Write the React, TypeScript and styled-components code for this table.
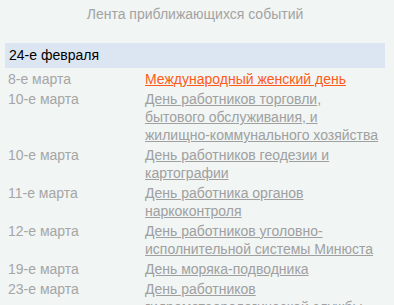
import React from 'react';
import styled, { createGlobalStyle } from 'styled-components';

const GlobalStyle = createGlobalStyle`
  html, body {
    margin: 0;
    padding: 0;
    background: #f1f5f4;
  }
  body {
    font-family: Arial, "Liberation Sans", sans-serif;
  }
`;

type Event = { date: string; title: string; hot?: boolean };

// ближайшие праздники
const events: Event[] = [
  { date: '8-е марта', title: 'Международный женский день', hot: true },
  { date: '10-е марта', title: 'День работников торговли, бытового обслуживания, и жилищно-коммунального хозяйства' },
  { date: '10-е марта', title: 'День работников геодезии и картографии' },
  { date: '11-е марта', title: 'День работника органов наркоконтроля' },
  { date: '12-е марта', title: 'День работников уголовно-исполнительной системы Минюста' },
  { date: '19-е марта', title: 'День моряка-подводника' },
  { date: '23-е марта', title: 'День работников гидрометеорологической службы' },
];

const App: React.FC = () => {
  return (
    <>
      <GlobalStyle />
      <Feed>
        <Title>Лента приближающихся событий</Title>
        <Today>24-е февраля</Today>
        <List>
          {events.map((e, i) => (
            <Row key={i}>
              <DateCell>{e.date}</DateCell>
              <Link href="#" $hot={e.hot}>{e.title}</Link>
            </Row>
          ))}
        </List>
      </Feed>
    </>
  );
};

export default App;

const Feed = styled.div`
  width: 394px;
  height: 305px;
  overflow: hidden;
  padding: 0 9px 0 5px;
  box-sizing: border-box;
`;

const Title = styled.div`
  text-align: center;
  color: #a3a3a3;
  font-size: 14px;
  line-height: 18px;
  padding: 5px 0 0;
  height: 43px;
  box-sizing: border-box;
`;

const Today = styled.div`
  background: #dce6f2;
  color: #000;
  font-size: 14px;
  line-height: 25px;
  height: 25px;
  padding-left: 4px;
`;

const List = styled.div`
  display: flex;
  flex-direction: column;
  padding: 1px 5px 0 3px;
`;

const Row = styled.div`
  display: grid;
  grid-template-columns: 137px 1fr;
  font-size: 14px;
  line-height: 18px;
  padding: 1px 0;
`;

const DateCell = styled.span`
  color: #a6a6a6;
`;

const Link = styled.a<{ $hot?: boolean }>`
  color: ${(p) => (p.$hot ? '#ff5a1a' : '#a0a0a0')};
  text-decoration: underline;
`;
